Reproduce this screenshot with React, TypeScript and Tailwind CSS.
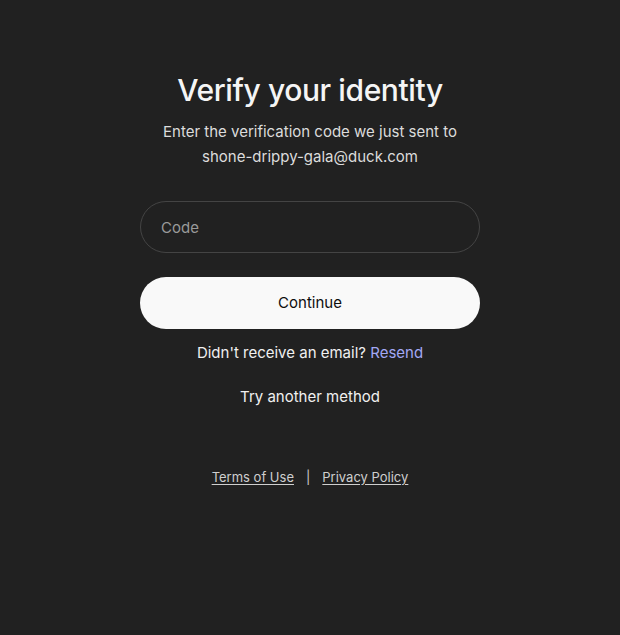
export default function App() {
  return (
    <div className="min-h-[635px] w-full bg-[#212121] text-white" style={{ fontFamily: 'Inter, "Noto Sans", sans-serif' }}>
      <main className="mx-auto flex w-[340px] flex-col items-center pt-[72px]">
        <h1 className="text-[30px] font-medium leading-[36px] tracking-[-0.4px] text-[#f5f5f5]">Verify your identity</h1>
        <p className="mt-[11px] text-center text-[15px] leading-[25px] text-[#dcdcdc]">
          Enter the verification code we just sent to
          <br />
          shone-drippy-gala@duck.com
        </p>

        <input
          placeholder="Code"
          className="mt-8 h-[52px] w-full rounded-full border border-[#444444] bg-transparent px-5 text-[15px] text-white outline-none placeholder:text-[#9a9a9a]"
        />

        <button className="mt-6 h-[52px] w-full rounded-full bg-[#f9f9f9] text-[15px] text-[#0d0d0d]">
          Continue
        </button>

        <p className="mt-[14px] text-[15px] leading-[20px] text-[#f0f0f0]">
          Didn't receive an email? <span className="text-[#a3a8f5]">Resend</span>
        </p>

        <button className="mt-6 text-[15px] leading-[20px] text-[#f0f0f0]">Try another method</button>

        <footer className="mt-[60px] flex items-center gap-3 text-[13px] leading-[20px] text-[#cfcfcf]">
          <a className="underline underline-offset-2">Terms of Use</a>
          <span className="text-[#cfcfcf]">|</span>
          <a className="underline underline-offset-2">Privacy Policy</a>
        </footer>
      </main>
    </div>
  )
}
